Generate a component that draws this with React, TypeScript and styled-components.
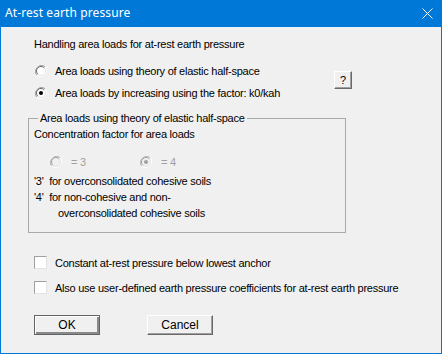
import React from "react";
import styled, { createGlobalStyle } from "styled-components";

const GlobalStyle = createGlobalStyle`
  html, body { margin: 0; padding: 0; background: #f0f0f0; }
  * { box-sizing: border-box; }
`;

const Window = styled.div`
  width: 442px;
  height: 354px;
  background: #f0f0f0;
  border: 1px solid #0078d7;
  border-top: none;
  display: flex;
  flex-direction: column;
  font-family: "Liberation Sans", Arial, sans-serif;
  font-size: 11px;
  letter-spacing: -0.25px;
  color: #000;
`;

const TitleBar = styled.div`
  height: 27px;
  margin: 0 -1px;
  background: #0078d7;
  color: #fff;
  display: flex;
  align-items: center;
  justify-content: space-between;
  padding: 0 9px 0 5px;
  font-family: "Noto Sans", "Open Sans", sans-serif;
  font-size: 12px;
  letter-spacing: 0.1px;
`;

const Title = styled.span`
  line-height: 16px;
  margin-top: -1px;
`;

const Body = styled.div`
  flex: 1;
  display: flex;
  flex-direction: column;
  padding: 11px 0 0 33px;
`;

const Line = styled.div<{ $mt?: number; $ml?: number }>`
  height: 13px;
  line-height: 13px;
  white-space: pre;
  margin-top: ${(p) => p.$mt ?? 0}px;
  margin-left: ${(p) => p.$ml ?? 0}px;
`;

const ChoiceRow = styled.div`
  display: flex;
  align-items: center;
  margin-top: 13px;
`;

const RadioColumn = styled.div`
  width: 299px;
  display: flex;
  flex-direction: column;
  gap: 9px;
  margin-left: 1px;
`;

const Option = styled.label<{ $gap?: number }>`
  display: flex;
  align-items: center;
  height: 13px;
  gap: ${(p) => p.$gap ?? 8}px;
`;

const HelpButton = styled.button`
  width: 18px;
  height: 18px;
  padding: 0;
  margin-top: -3px;
  background: #f0f0f0;
  border: 1px solid;
  border-color: #fff #696969 #696969 #fff;
  box-shadow: inset -1px -1px 0 #a0a0a0;
  font-family: "Liberation Sans", Arial, sans-serif;
  font-size: 11px;
  line-height: 14px;
  color: #000;
`;

const Group = styled.fieldset`
  margin: 13px 0 0 -6px;
  width: 318px;
  height: 121px;
  border: 1px solid #a9a9a9;
  padding: 0 0 0 5px;
  display: flex;
  flex-direction: column;
`;

const Legend = styled.legend`
  padding: 0 2px;
  margin-left: 4px;
  height: 13px;
  line-height: 13px;
`;

const FactorRow = styled.div`
  display: flex;
  margin: 14px 0 0 16px;
`;

const FactorOption = styled(Option)`
  width: 90px;
  color: #a0a0a0;
`;

const CheckRow = styled.label<{ $mt: number }>`
  display: flex;
  align-items: center;
  gap: 8px;
  height: 13px;
  margin-top: ${(p) => p.$mt}px;
`;

const CheckBox = styled.span`
  width: 13px;
  height: 13px;
  flex: none;
  background: #fff;
  border: 1px solid;
  border-color: #a0a0a0 #e3e3e3 #e3e3e3 #a0a0a0;
`;

const ButtonRow = styled.div`
  display: flex;
  gap: 47px;
  margin-top: 21px;
`;

const PushButton = styled.button<{ $default?: boolean }>`
  width: 66px;
  height: 20px;
  padding: 0;
  background: #f0f0f0;
  border: 1px solid;
  border-color: ${(p) => (p.$default ? "#646464" : "#fff #696969 #696969 #fff")};
  box-shadow: ${(p) =>
    p.$default
      ? "inset 1px 1px 0 #fff, inset -2px -2px 0 #8a8a8a"
      : "inset -1px -1px 0 #a0a0a0"};
  font-family: "Liberation Sans", Arial, sans-serif;
  font-size: 12px;
  letter-spacing: 0;
  color: #000;
  line-height: 16px;
`;

function Radio({ checked, disabled }: { checked?: boolean; disabled?: boolean }) {
  const dark = disabled ? "#b4b4b4" : "#a0a0a0";
  const darker = disabled ? "#a0a0a0" : "#696969";
  const dot = disabled ? "#a0a0a0" : "#000";
  const fill = disabled ? "#f0f0f0" : "#fff";
  return (
    <svg width="12" height="12" viewBox="0 0 12 12" style={{ flex: "none" }}>
      <path d="M10.2 1.8 A6 6 0 0 0 1.8 10.2" stroke={dark} strokeWidth="1" fill="none" />
      <path d="M1.8 10.2 A6 6 0 0 0 10.2 1.8" stroke="#fff" strokeWidth="1" fill="none" />
      <circle cx="6" cy="6" r="4.6" fill={fill} />
      <path d="M9.2 2.8 A4.5 4.5 0 0 0 2.8 9.2" stroke={darker} strokeWidth="1" fill="none" />
      <path d="M2.8 9.2 A4.5 4.5 0 0 0 9.2 2.8" stroke="#e3e3e3" strokeWidth="1" fill="none" />
      {checked && <circle cx="6" cy="6" r="2" fill={dot} />}
    </svg>
  );
}

function CloseIcon() {
  return (
    <svg width="11" height="11" viewBox="0 0 11 11">
      <path d="M0.5 0.5 L10.5 10.5 M10.5 0.5 L0.5 10.5" stroke="#fff" strokeWidth="1" />
    </svg>
  );
}

export default function App() {
  return (
    <>
      <GlobalStyle />
      <Window>
        <TitleBar>
          <Title>At-rest earth pressure</Title>
          <CloseIcon />
        </TitleBar>
        <Body>
          <Line>Handling area loads for at-rest earth pressure</Line>
          <ChoiceRow>
            <RadioColumn>
              <Option>
                <Radio />
                <span>Area loads using theory of elastic half-space</span>
              </Option>
              <Option>
                <Radio checked />
                <span>Area loads by increasing using the factor: k0/kah</span>
              </Option>
            </RadioColumn>
            <HelpButton>?</HelpButton>
          </ChoiceRow>
          <Group>
            <Legend>Area loads using theory of elastic half-space</Legend>
            <Line $mt={3}>Concentration factor for area loads</Line>
            <FactorRow>
              <FactorOption $gap={9}>
                <Radio disabled />
                <span>= 3</span>
              </FactorOption>
              <FactorOption $gap={9}>
                <Radio disabled checked />
                <span>= 4</span>
              </FactorOption>
            </FactorRow>
            <Line $mt={7}>{"'3'  for overconsolidated cohesive soils"}</Line>
            <Line $mt={3}>{"'4'  for non-cohesive and non-"}</Line>
            <Line $mt={3} $ml={24}>overconsolidated cohesive soils</Line>
          </Group>
          <CheckRow $mt={23}>
            <CheckBox />
            <span>Constant at-rest pressure below lowest anchor</span>
          </CheckRow>
          <CheckRow $mt={12}>
            <CheckBox />
            <span>Also use user-defined earth pressure coefficients for at-rest earth pressure</span>
          </CheckRow>
          <ButtonRow>
            <PushButton $default>OK</PushButton>
            <PushButton>Cancel</PushButton>
          </ButtonRow>
        </Body>
      </Window>
    </>
  );
}
